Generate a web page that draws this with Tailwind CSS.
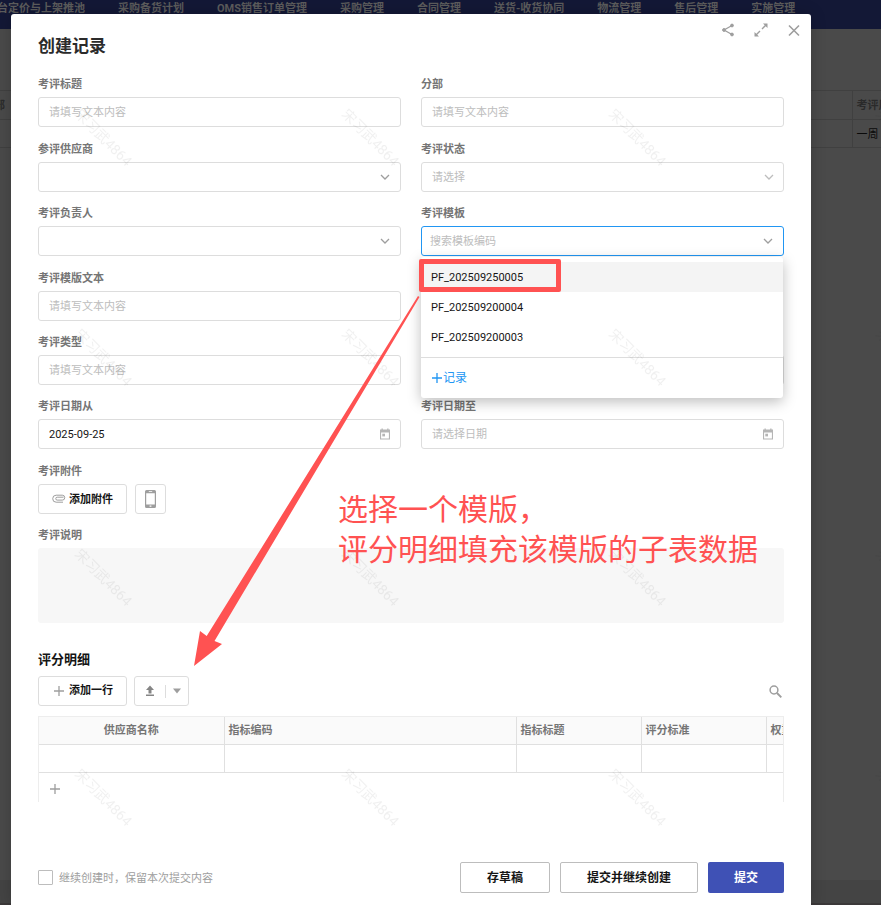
<!DOCTYPE html>
<html lang="zh-CN">

<head>
  <meta charset="UTF-8">
  <meta name="viewport" content="width=device-width, initial-scale=1.0">
  <title>创建记录</title>
  <script src="https://cdn.jsdelivr.net/npm/@tailwindcss/browser@4"></script>
</head>

<body class="relative min-h-screen overflow-hidden bg-[#4a4a4a] font-[Roboto,'Noto_Sans_CJK_SC',sans-serif] text-[11px] leading-4 text-[#151515]">

  <!-- Page behind the dialog -->
  <div class="absolute inset-0 overflow-hidden">
    <div class="bg-[#131836]">
      <nav class="-ml-[3px] flex h-[29px] items-start gap-[33px] overflow-hidden pt-px font-bold whitespace-nowrap text-[#5c5c5c]">
        <a href="#">台定价与上架推池</a>
        <a href="#">采购备货计划</a>
        <a href="#">OMS销售订单管理</a>
        <a href="#">采购管理</a>
        <a href="#">合同管理</a>
        <a href="#">送货-收货协同</a>
        <a href="#">物流管理</a>
        <a href="#">售后管理</a>
        <a href="#">实施管理</a>
      </nav>
    </div>
    <table class="mt-[61px] w-full table-fixed border-collapse">
      <thead>
        <tr class="h-[29px] border-y border-[#404040] text-left text-[#2a2a2a]">
          <th class="w-[11px] overflow-hidden p-0 pt-[2px]"><span class="-ml-[6px]">部</span></th>
          <th></th>
          <th class="w-[29px] overflow-hidden border-l border-[#404040] p-0 pt-[2px] pl-1 whitespace-nowrap">考评周期</th>
        </tr>
      </thead>
      <tbody>
        <tr class="h-[28px] border-b border-[#404040] text-[#0a0a0a]">
          <td></td>
          <td></td>
          <td class="overflow-hidden border-l border-[#404040] p-0 pt-[2px] pl-1 whitespace-nowrap">一周</td>
        </tr>
      </tbody>
    </table>
    <div class="absolute inset-x-0 bottom-0 h-[25px] border-b-2 border-[#3b3839] bg-[#444444]"></div>
  </div>

  <!-- Dialog -->
  <div role="dialog" aria-labelledby="dialog-title" class="relative mt-[14px] mr-[70px] ml-[11px] flex min-h-[calc(100vh-14px)] flex-col rounded-t-[3px] bg-white px-[27px] pt-5 pb-3 shadow-[0_0_16px_rgba(0,0,0,0.2)]">
    <div class="absolute top-[9px] right-[10px] flex gap-[19px] text-[#9e9e9e]">
      <button aria-label="分享" class="size-[14px]">
        <svg viewBox="0 0 14 14" class="size-[14px]" fill="currentColor" stroke="currentColor">
          <path d="M11 2.5 3 7l8 4.500" fill="none" stroke-width="1.300" />
          <circle cx="11" cy="2.500" r="1.400" /><circle cx="3" cy="7" r="1.400" /><circle cx="11" cy="11.500" r="1.400" />
        </svg>
      </button>
      <button aria-label="全屏" class="size-[14px]">
        <svg viewBox="0 0 14 14" class="size-[14px]" fill="currentColor" stroke="currentColor" stroke-width="1.400">
          <path d="M8 6l4-4M6 8l-4 4" fill="none" />
          <path d="M9 .5h4.500V5zM.5 9v4.500H5z" stroke="none" />
        </svg>
      </button>
      <button aria-label="关闭" class="size-[14px]">
        <svg viewBox="0 0 14 14" class="size-[14px]" fill="none" stroke="currentColor" stroke-width="1.600">
          <path d="M2 2.500l10 10M12 2.500l-10 10" />
        </svg>
      </button>
    </div>

    <h1 id="dialog-title" class="text-[17px] leading-6 font-bold text-[#2b2b2b]">创建记录</h1>

    <form class="mt-[18px] flex flex-1 flex-col">
      <div class="grid grid-cols-2 gap-x-5">
        <div class="mb-[14px]">
          <label for="f-title" class="mb-1 block pt-px font-bold text-[#757575]">考评标题</label>
          <input id="f-title" type="text" placeholder="请填写文本内容" class="block h-[30px] w-full rounded-[3px] border border-[#dddddd] px-[10px] placeholder:text-[#bdbdbd]">
        </div>
        <div class="mb-[14px]">
          <label for="f-branch" class="mb-1 block pt-px font-bold text-[#757575]">分部</label>
          <input id="f-branch" type="text" placeholder="请填写文本内容" class="block h-[30px] w-full rounded-[3px] border border-[#dddddd] px-[10px] placeholder:text-[#bdbdbd]">
        </div>

        <div class="mb-[13px]">
          <label for="f-supplier" class="mb-1 block pt-px font-bold text-[#757575]">参评供应商</label>
          <div class="relative">
            <select id="f-supplier" class="block h-[30px] w-full appearance-none rounded-[3px] border border-[#dddddd] px-[10px]"><option></option></select>
            <svg viewBox="0 0 10 10" class="pointer-events-none absolute top-[10px] right-[11px] size-[10px]" fill="none" stroke="#9e9e9e" stroke-width="1.300"><path d="M1 3l4 4 4-4" /></svg>
          </div>
        </div>
        <div class="mb-[13px]">
          <label for="f-status" class="mb-1 block pt-px font-bold text-[#757575]">考评状态</label>
          <div class="relative">
            <select id="f-status" class="block h-[30px] w-full appearance-none rounded-[3px] border border-[#dddddd] px-[10px] pt-[2px] text-[#bdbdbd]"><option>请选择</option></select>
            <svg viewBox="0 0 10 10" class="pointer-events-none absolute top-[10px] right-[10px] size-[10px]" fill="none" stroke="#bdbdbd" stroke-width="1.300"><path d="M1 3l4 4 4-4" /></svg>
          </div>
        </div>

        <div class="mb-[14px]">
          <label for="f-owner" class="mb-1 block pt-px font-bold text-[#757575]">考评负责人</label>
          <div class="relative">
            <select id="f-owner" class="block h-[30px] w-full appearance-none rounded-[3px] border border-[#dddddd] px-[10px]"><option></option></select>
            <svg viewBox="0 0 10 10" class="pointer-events-none absolute top-[10px] right-[11px] size-[10px]" fill="none" stroke="#9e9e9e" stroke-width="1.300"><path d="M1 3l4 4 4-4" /></svg>
          </div>
        </div>
        <div class="mb-[14px]">
          <label for="f-template" class="mb-1 block pt-px font-bold text-[#757575]">考评模板</label>
          <div class="relative">
            <input id="f-template" type="text" role="combobox" aria-expanded="true" aria-controls="template-menu" placeholder="搜索模板编码" class="block h-[30px] w-full rounded-[3px] border border-[#2196f3] px-2 placeholder:text-[#bdbdbd]">
            <svg viewBox="0 0 10 10" class="pointer-events-none absolute top-[10px] right-[11px] size-[10px]" fill="none" stroke="#9e9e9e" stroke-width="1.300"><path d="M1 3l4 4 4-4" /></svg>
            <div id="template-menu" class="absolute top-[31px] right-px left-0 z-10 rounded-[3px] bg-white pt-[5px] shadow-[0_4px_14px_rgba(0,0,0,0.26)]">
              <ul role="listbox" class="border-b border-[#dddddd] pb-[5px]">
                <li role="option" aria-selected="true" class="relative bg-[#f4f4f4] px-[10px] pt-[2px] leading-7">
                  PF_202509250005
                  <span class="absolute -top-[3px] -left-[2px] h-[33px] w-[142px] rounded-[2px] border-[5px] border-[#ff5252]"></span>
                </li>
                <li role="option" class="px-[10px] pt-[2px] leading-7">PF_202509200004</li>
                <li role="option" class="px-[10px] pt-[2px] leading-7">PF_202509200003</li>
              </ul>
              <button type="button" class="flex h-10 w-full items-center px-[10px] text-[12px] text-[#2196f3]">
                <svg viewBox="0 0 12 12" class="size-[12px]" fill="none" stroke="currentColor" stroke-width="1.300"><path d="M6 1v10M1 6h10" /></svg>
                记录
              </button>
            </div>
          </div>
        </div>

        <div class="col-span-2 mb-[13px] grid grid-cols-2 gap-x-5">
          <div>
            <label for="f-text" class="mb-1 block pt-px font-bold text-[#757575]">考评模版文本</label>
            <input id="f-text" type="text" placeholder="请填写文本内容" class="block h-[30px] w-full rounded-[3px] border border-[#dddddd] px-[10px] placeholder:text-[#bdbdbd]">
          </div>
        </div>

        <div class="mb-[13px]">
          <label for="f-type" class="mb-1 block pt-px font-bold text-[#757575]">考评类型</label>
          <input id="f-type" type="text" placeholder="请填写文本内容" class="block h-[30px] w-full rounded-[3px] border border-[#dddddd] px-[10px] placeholder:text-[#bdbdbd]">
        </div>
        <div class="mb-[13px] flex items-end">
          <input type="text" aria-label="考评周期" class="block h-[30px] w-full rounded-[3px] border border-[#dddddd] px-[10px]">
        </div>

        <div class="mb-[14px]">
          <label for="f-from" class="mb-1 block pt-px font-bold text-[#757575]">考评日期从</label>
          <div class="relative">
            <input id="f-from" type="text" value="2025-09-25" class="block h-[30px] w-full rounded-[3px] border border-[#dddddd] px-[10px]">
            <svg viewBox="0 0 12 12" class="pointer-events-none absolute top-[9px] right-[10px] size-[12px]" fill="#b5b5b5"><path fill-rule="evenodd" d="M1 1.500h1.500V.5h1.300v1h4.400v-1h1.300v1H11v10H1zM2.100 4.500v5.900h7.800V4.500z" /><path d="M3.300 5.700H6V8.400H3.300z" /></svg>
          </div>
        </div>
        <div class="mb-[14px]">
          <label for="f-to" class="mb-1 block pt-px font-bold text-[#757575]">考评日期至</label>
          <div class="relative">
            <input id="f-to" type="text" placeholder="请选择日期" class="block h-[30px] w-full rounded-[3px] border border-[#dddddd] px-[10px] placeholder:text-[#bdbdbd]">
            <svg viewBox="0 0 12 12" class="pointer-events-none absolute top-[9px] right-[10px] size-[12px]" fill="#b5b5b5"><path fill-rule="evenodd" d="M1 1.500h1.500V.5h1.300v1h4.400v-1h1.300v1H11v10H1zM2.100 4.500v5.900h7.800V4.500z" /><path d="M3.300 5.700H6V8.400H3.300z" /></svg>
          </div>
        </div>
      </div>

      <div class="mb-[13px]">
        <div class="mb-1 pt-px font-bold text-[#757575]">考评附件</div>
        <div class="flex gap-2">
          <button type="button" class="flex h-[30px] items-center gap-[3px] rounded-[3px] border border-[#dddddd] px-[13px] font-bold">
            <svg viewBox="0 0 14 10" class="h-[10px] w-[14px]" fill="none" stroke="#9e9e9e"><path d="M11.500 3.200H5.200a1.400 1.400 0 0 0 0 2.900h5.100a2.300 2.300 0 0 0 0-4.900H4.200a3.400 3.400 0 0 0 0 7H11" /></svg>
            <span class="pt-px">添加附件</span>
          </button>
          <button type="button" aria-label="手机上传" class="flex h-[30px] w-[31px] items-center justify-center rounded-[3px] border border-[#dddddd]">
            <svg viewBox="0 0 11 18" class="h-[18px] w-[11px]"><path fill="#9e9e9e" fill-rule="evenodd" d="M1.500 0h8A1.500 1.500 0 0 1 11 1.500v15A1.500 1.500 0 0 1 9.500 18h-8A1.500 1.500 0 0 1 0 16.500v-15A1.500 1.500 0 0 1 1.500 0zM1.200 3.200v11.300h8.600V3.200zM3.800 1.200v.9h3.400v-.9zM4.600 15.600v1.200h1.800v-1.200z" /></svg>
          </button>
        </div>
      </div>

      <label for="f-note" class="mb-1 block pt-px font-bold text-[#757575]">考评说明</label>
      <textarea id="f-note" disabled class="block h-[75px] w-full shrink-0 resize-none rounded-[3px] bg-[#f7f7f7] p-[10px]"></textarea>

      <h2 class="mt-[29px] text-[13px] font-bold">评分明细</h2>
      <div class="mt-2 flex items-center gap-[7px]">
        <button type="button" class="flex h-[30px] items-center gap-[3px] rounded-[3px] border border-[#dddddd] px-[13px] font-bold">
          <svg viewBox="0 0 14 14" class="size-[14px]" fill="none" stroke="#9e9e9e" stroke-width="1.300"><path d="M7 2v10M2 7h10" /></svg>
          添加一行
        </button>
        <div class="flex h-[30px] items-center rounded-[3px] border border-[#dddddd]">
          <button type="button" aria-label="导入" class="flex w-[30px] justify-center">
            <svg viewBox="0 0 10 12" class="h-[12px] w-[10px]" fill="#858585"><path d="M5 .5 9 5H6.500v3.500h-3V5H1zM1 9.500h8V11H1z" /></svg>
          </button>
          <span class="h-[13px] w-px bg-[#dddddd]"></span>
          <button type="button" aria-label="更多" class="flex w-[22px] justify-center">
            <svg viewBox="0 0 8 6" class="h-[6px] w-[8px]" fill="#9e9e9e"><path d="M0 .5h8L4 5.500z" /></svg>
          </button>
        </div>
        <button type="button" aria-label="搜索" class="mr-[2px] ml-auto">
          <svg viewBox="0 0 13 13" class="size-[13px]" fill="none" stroke="#9e9e9e"><circle cx="5" cy="5" r="3.900" stroke-width="1.500" /><path d="M8 8l4.300 4.300" stroke-width="1.900" /></svg>
        </button>
      </div>

      <div class="mt-[10px] overflow-hidden border-x border-t border-[#ededed]">
        <table class="w-[852px] table-fixed border-collapse text-left">
          <thead>
            <tr class="h-[27px] border-b border-[#e0e0e0] bg-[#fafafa] text-[#757575]">
              <th class="w-[185px] border-r border-[#e0e0e0] p-0 pt-[2px] text-center">供应商名称</th>
              <th class="w-[292px] border-r border-[#e0e0e0] p-0 pt-[2px] pl-1">指标编码</th>
              <th class="w-[125px] border-r border-[#e0e0e0] p-0 pt-[2px] pl-1">指标标题</th>
              <th class="w-[125px] border-r border-[#e0e0e0] p-0 pt-[2px] pl-1">评分标准</th>
              <th class="p-0 pt-[2px] pl-1">权重</th>
            </tr>
          </thead>
          <tbody>
            <tr class="h-[28px] border-b border-[#e0e0e0]">
              <td class="border-r border-[#e0e0e0]"></td>
              <td class="border-r border-[#e0e0e0]"></td>
              <td class="border-r border-[#e0e0e0]"></td>
              <td class="border-r border-[#e0e0e0]"></td>
              <td></td>
            </tr>
          </tbody>
        </table>
        <button type="button" aria-label="新增行" class="flex h-[29px] items-center pt-1 pl-[10px]">
          <svg viewBox="0 0 12 12" class="size-[12px]" fill="none" stroke="#9e9e9e" stroke-width="1.300"><path d="M6 1v10M1 6h10" /></svg>
        </button>
      </div>

      <div class="mt-auto flex flex-wrap items-center gap-[10px] pt-4">
        <label class="mr-auto flex items-center gap-[6px] text-[#9e9e9e]">
          <input type="checkbox" class="size-[15px] appearance-none rounded-[1px] border border-[#bdbdbd]">
          <span class="pt-[2px]">继续创建时，保留本次提交内容</span>
        </label>
        <button type="button" class="h-[31px] rounded-[2px] border border-[#bdbdbd] px-[26px] text-[12px] font-bold">存草稿</button>
        <button type="button" class="h-[31px] rounded-[2px] border border-[#bdbdbd] px-[26px] text-[12px] font-bold">提交并继续创建</button>
        <button type="submit" class="h-[31px] rounded-[2px] bg-[#3f51b5] px-[26px] text-[12px] font-bold text-white">提交</button>
      </div>
    </form>
  </div>

  <!-- Watermark -->
  <svg class="pointer-events-none absolute inset-0 z-20 size-full" aria-hidden="true">
    <defs>
      <pattern id="watermark" width="267" height="220" patternUnits="userSpaceOnUse">
        <text transform="translate(74 115) rotate(45)" font-size="14" fill="#000000" fill-opacity="0.06">宋习武4864</text>
      </pattern>
    </defs>
    <rect width="100%" height="100%" fill="url(#watermark)" />
  </svg>

  <!-- Annotation -->
  <svg class="pointer-events-none absolute top-0 left-0 z-30 h-[905px] w-[881px]" viewBox="0 0 881 905" fill="#ff5252" aria-hidden="true">
    <path d="M418 296l1.500 1L214.500 641l7.500 3-28 22 6-35 6.700 5z" />
  </svg>
  <p class="pointer-events-none absolute top-[490px] left-[338px] z-30 text-[30px] leading-10 whitespace-nowrap text-[#ff5252]">选择一个模版，<br>评分明细填充该模版的子表数据</p>
</body>
</html>
